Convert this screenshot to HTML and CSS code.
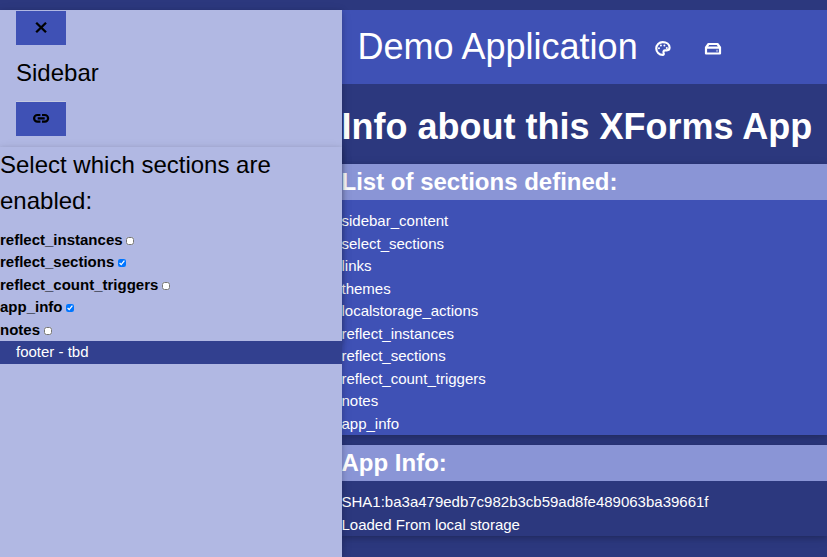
FILE: index.html
```
<!DOCTYPE html>
<html lang="en">
<head>
<meta charset="utf-8">
<title>Demo Application</title>
<link rel="stylesheet" href="styles.css">
</head>
<body>
<div class="app">
  <aside class="sidebar">
    <div class="sidebar-head">
      <button class="button" aria-label="Close"><svg viewBox="0 0 18 18"><path d="M4.200 3.700L14 13.300M14 3.700L4.200 13.300" fill="none" stroke="currentColor" stroke-width="2.300"/></svg></button>
      <h3>Sidebar</h3>
      <button class="button raised" aria-label="Links"><svg viewBox="0 0 18 18"><path d="M8.400 5H5.400a3.300 3.300 0 0 0 0 6.600h3M10 5h2.800a3.300 3.300 0 0 1 0 6.600H10M5.700 8.300h7" fill="none" stroke="currentColor" stroke-width="2.200"/></svg></button>
    </div>
    <div class="panel card">
      <h3>Select which sections are enabled:</h3>
      <div class="options">
        <label>reflect_instances <input type="checkbox"></label>
        <label>reflect_sections <input type="checkbox" checked></label>
        <label>reflect_count_triggers <input type="checkbox"></label>
        <label>app_info <input type="checkbox" checked></label>
        <label>notes <input type="checkbox"></label>
      </div>
    </div>
    <footer>footer - tbd</footer>
  </aside>
  <main>
    <header>
      <h1>Demo Application</h1>
      <button class="button light" aria-label="Themes"><svg viewBox="-0.500 0 26 26"><path d="M12 3a9 9 0 1 0 0 18.500c1.700 0 2-1.500 1.500-2.500c-1-2.200 0-4 2-4h2.500c2.500 0 4-1.700 4-4C22 6 17.500 3 12 3z" fill="none" stroke="currentColor" stroke-width="3.100"/><g fill="currentColor"><circle cx="6.700" cy="12" r="1.500"/><circle cx="9.500" cy="8" r="1.400"/><circle cx="14.500" cy="8" r="1.400"/><circle cx="18" cy="11.500" r="1.500"/></g></svg></button>
      <button class="button light" aria-label="Storage"><svg viewBox="0 0 18 18"><path d="M2 7.500L4.500 4h9L16 7.500v6H2zM2 7.600h14" fill="none" stroke="currentColor" stroke-width="2.200" stroke-linejoin="round"/><path d="M12 9.700h2v2h-2z" fill="currentColor" opacity=".45"/></svg></button>
    </header>
    <h1 class="page-title">Info about this XForms App</h1>
    <section class="sections card">
      <h3>List of sections defined:</h3>
      <div>sidebar_content</div>
      <div>select_sections</div>
      <div>links</div>
      <div>themes</div>
      <div>localstorage_actions</div>
      <div>reflect_instances</div>
      <div>reflect_sections</div>
      <div>reflect_count_triggers</div>
      <div>notes</div>
      <div>app_info</div>
    </section>
    <section class="info card">
      <h3>App Info:</h3>
      <div>SHA1:ba3a479edb7c982b3cb59ad8fe489063ba39661f</div>
      <div>Loaded From local storage</div>
    </section>
  </main>
</div>
</body>
</html>
```
FILE: styles.css
```
* { box-sizing: border-box; }
html, body { margin: 0; height: 100%; overflow: hidden; }
body {
  background: #2c387e;
  color: #fff;
  font: 15px/1.5 "Liberation Sans", Arial, sans-serif;
}
h1, h3 { margin: 0; font-weight: 400; }
h1 { font-size: 36px; }
h3 { font-size: 24px; }
.card { box-shadow: 0 2px 5px rgba(0,0,0,.16), 0 2px 10px rgba(0,0,0,.12); }
.app {
  display: grid;
  grid-template-columns: 341.5px minmax(0, 1fr);
  height: 100%;
  padding-top: 10px;
}
.sidebar {
  position: relative;
  z-index: 1;
  background: #b1b8e3;
  color: #000;
  box-shadow: 0 2px 5px rgba(0,0,0,.16), 0 2px 10px rgba(0,0,0,.12);
}
.sidebar-head { height: 136.8px; padding: 1px 16px 0; }
.sidebar-head h3 { margin: 10px 0 11px; }
.button {
  display: block;
  width: 50px;
  height: 34px;
  padding: 8px 16px;
  border: 0;
  background: #3f51b5;
  color: #000;
}
.button svg { display: block; width: 18px; height: 18px; }
.raised { box-shadow: 0 -1px #c5cae0; }
.light { color: #fff; padding: 10px 16px 6px; }
.panel { color: #000; }
.options { padding-top: 10px; font-weight: 700; }
.options label { display: block; height: 22.5px; white-space: nowrap; }
.options input { width: 8px; height: 8px; margin: 0 0 0 -0.4px; vertical-align: 0; }
footer { background: #32408f; color: #fff; padding: 0 16px; }
header {
  display: flex;
  align-items: center;
  height: 74px;
  padding-left: 16px;
  background: #3f51b5;
}
.page-title { margin: 16px 0 10px; font-weight: 700; white-space: nowrap; }
.sections { background: #3f51b5; }
.info { margin-top: 10px; }
section h3 {
  margin-bottom: 10px;
  background: #8a95d6;
  font-weight: 700;
}
```
